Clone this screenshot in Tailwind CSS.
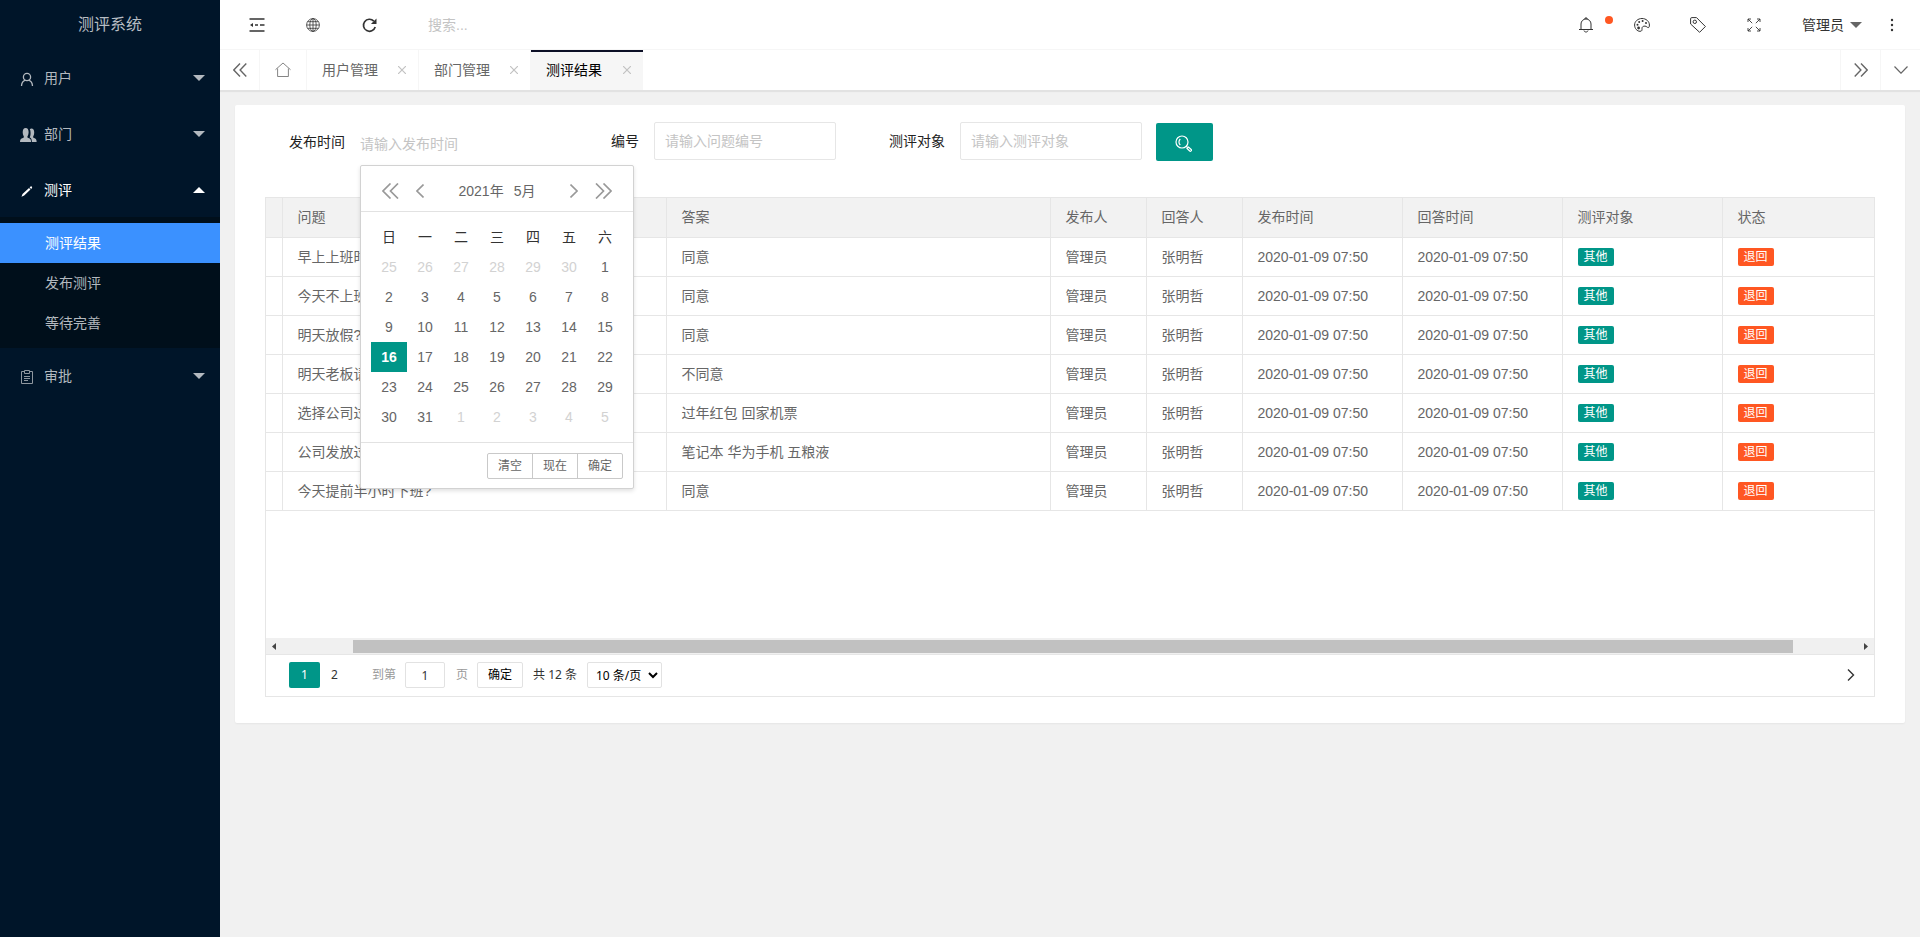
<!DOCTYPE html>
<html lang="zh-CN">
<head>
<meta charset="utf-8">
<title>测评系统</title>
<meta name="viewport" content="width=device-width, initial-scale=1">
<script src="https://cdn.jsdelivr.net/npm/@tailwindcss/browser@4"></script>
</head>
<body class="flex min-h-screen bg-[#f1f1f1] font-['Liberation_Sans','Noto_Sans_CJK_SC',sans-serif] text-sm text-[#666]">

<aside class="w-[220px] shrink-0 bg-[#001529] text-[#b3b9bf]">
  <h1 class="flex h-[49px] items-center justify-center text-base text-[#b8bdc3]">测评系统</h1>
  <nav>
    <button type="button" class="flex h-14 w-full items-center pt-0.5 pr-[15px] pl-5">
      <svg class="mt-0.5 mr-2.5 size-3.5 text-[#b3b9bf]" viewBox="0 0 14 14" fill="none" stroke="currentColor" stroke-width="1.3"><circle cx="7" cy="5" r="3.6"/><path d="M1.5 14c.2-3 1.600-5 3.800-5.800M12.500 14c-.2-3-1.600-5-3.800-5.800"/></svg>
      <span>用户</span>
      <svg class="ml-auto h-1.5 w-3" viewBox="0 0 12 6" fill="currentColor"><path d="M0 0h12L6 6z"/></svg>
    </button>
    <button type="button" class="flex h-14 w-full items-center pt-0.5 pr-[15px] pl-5">
      <svg class="mt-0.5 mr-1.5 h-3.5 w-[18px]" viewBox="0 0 20 14" preserveAspectRatio="none" fill="currentColor"><path d="M0 14c0-2.500 1-3.400 3.200-4 1.100-.3 1.400-1 .9-1.800C3.300 7 3 5.600 3 4.200 3 1.600 4.200 0 6.300 0s3.300 1.600 3.300 4.200c0 1.400-.4 2.800-1.200 4-.5.800-.2 1.500.9 1.800 2.200.6 3 1.500 3 4z"/><path d="M13.200 14c0-2.300-.6-3.700-2.500-4.700.8-1 1.200-3 1-5.100 0-1.200-.3-2.200-.8-3 .5-.5 1.100-.7 1.800-.7 2 0 3.100 1.500 3.100 3.900 0 1.400-.3 2.700-1 3.800-.5.800-.2 1.500.8 1.800 2 .6 2.900 1.600 2.900 4z"/></svg>
      <span>部门</span>
      <svg class="ml-auto h-1.5 w-3" viewBox="0 0 12 6" fill="currentColor"><path d="M0 0h12L6 6z"/></svg>
    </button>
    <button type="button" class="flex h-14 w-full items-center pt-0.5 pr-[15px] pl-5 text-white" aria-expanded="true">
      <svg class="mt-0.5 mr-2.5 size-3.5" viewBox="0 0 14 14" fill="currentColor"><path d="M1.500 12.800l1-2.800 6.500-6 1.500 1.500L4.200 11.600zM9.600 3.400l1-.9c.8-.6 2 .5 1.400 1.400l-.8 1z"/></svg>
      <span>测评</span>
      <svg class="ml-auto h-1.5 w-3" viewBox="0 0 12 6" fill="currentColor"><path d="M0 6h12L6 0z"/></svg>
    </button>
    <div class="bg-[#000f1b] py-[5px]">
      <a href="#" class="mt-px flex h-10 items-center bg-[#3b91ff] pl-[45px] text-white">测评结果</a>
      <a href="#" class="flex h-10 items-center pl-[45px]">发布测评</a>
      <a href="#" class="flex h-10 items-center pl-[45px]">等待完善</a>
    </div>
    <button type="button" class="flex h-14 w-full items-center pr-[15px] pl-5">
      <svg class="mt-0.5 mr-2.5 size-3.5 text-[#8f979f]" viewBox="0 0 14 14" fill="none" stroke="currentColor"><path d="M4 1.500H1.500v12h11v-12H10M4.500.5h5v3h-5zM4 6.500h6M4 8.500h6M4 10.500h4"/></svg>
      <span>审批</span>
      <svg class="ml-auto h-1.5 w-3" viewBox="0 0 12 6" fill="currentColor"><path d="M0 0h12L6 6z"/></svg>
    </button>
  </nav>
</aside>

<div class="min-w-0 flex-1">
  <header class="flex h-[50px] items-center border-b border-[#f6f6f6] bg-white pt-px text-[#333]">
    <button type="button" aria-label="收起菜单" class="ml-[9px] flex w-14 justify-center">
      <svg class="h-3.5 w-4" viewBox="0 0 16 14" fill="none" stroke="currentColor" stroke-width="1.500"><path d="M.500 1h15M6 7h3M11 7h4.500M.500 13h15"/><path d="M1 7l3-2v4z" fill="currentColor" stroke="none"/></svg>
    </button>
    <button type="button" aria-label="网站" class="flex w-14 justify-center">
      <svg class="size-3.5" viewBox="0 0 14 14" fill="none" stroke="currentColor" stroke-width=".8"><circle cx="7" cy="7" r="6.400"/><ellipse cx="7" cy="7" rx="3.200" ry="6.400"/><path d="M7 .6v12.800M.6 7h12.800M1.600 3.700h10.800M1.600 10.300h10.800"/></svg>
    </button>
    <button type="button" aria-label="刷新" class="flex w-14 justify-center">
      <svg class="size-[15px]" viewBox="0 0 15 15" fill="none" stroke="currentColor" stroke-width="1.700"><path d="M11.800 3.100A6 6 0 1 0 13.200 9"/><path d="M14.500.5v5.600H8.900z" fill="currentColor" stroke="none"/></svg>
    </button>
    <input type="text" aria-label="搜索" placeholder="搜索..." class="ml-[31px] w-44 outline-none placeholder:text-[#c4c4c4]">
    <button type="button" aria-label="消息" class="relative ml-auto flex w-14 justify-center">
      <svg class="size-4" viewBox="0 0 16 16" fill="none" stroke="currentColor"><path d="M1 12.500h14M3 12.500V7a5 5 0 0 1 10 0v5.500M7 2V1h2v1M6 13.500c.3 2 3.700 2 4 0"/></svg>
      <span class="absolute -top-px right-px size-2 rounded-full bg-[#ff5722]"></span>
    </button>
    <button type="button" aria-label="主题" class="flex w-14 justify-center">
      <svg class="size-4" viewBox="0 0 16 16" fill="none" stroke="currentColor"><path d="M8 1.500C3.900 1.500.6 4.400.6 8c0 3.500 2.500 6.300 5.400 6.300 2.300 0 2-1.500 2-2.800 0-1.700 1.200-2.500 3-2.400 1.700.1 2.200 1.500 3.200 1.500 1 0 1.200-1.200 1.200-2.600C15.400 4.400 12.100 1.500 8 1.500z"/><g fill="currentColor" stroke="none"><circle cx="3.500" cy="7.800" r="1"/><circle cx="5.200" cy="4.900" r="1"/><circle cx="8.600" cy="4" r="1"/><circle cx="12" cy="6" r="1"/><circle cx="4.600" cy="11" r="1.400"/></g></svg>
    </button>
    <button type="button" aria-label="标签" class="flex w-14 justify-center">
      <svg class="size-4" viewBox="0 0 16 16" fill="none" stroke="currentColor"><path d="M.600 1.800Q.600.600 1.800.600H6.500L15.400 9.500 9.600 15.300.600 7z"/><circle cx="4.800" cy="4.800" r="1.700"/></svg>
    </button>
    <button type="button" aria-label="全屏" class="flex w-14 justify-center">
      <svg class="size-3.5" viewBox="0 0 14 14" fill="none" stroke="currentColor" stroke-width=".9"><path d="M1 4V1h3M1 1l4.200 4.200M10 1h3v3M13 1 8.800 5.200M1 10v3h3M1 13l4.200-4.200M13 10v3h-3M13 13 8.800 8.800"/></svg>
    </button>
    <button type="button" class="ml-5 flex items-center text-[#333]">管理员
      <svg class="ml-1.5 h-1.5 w-3 text-[#666]" viewBox="0 0 12 6" fill="currentColor"><path d="M0 0h12L6 6z"/></svg>
    </button>
    <button type="button" aria-label="更多" class="mr-4 ml-[18px] flex w-6 justify-center">
      <svg class="h-3.5 w-1" viewBox="0 0 4 14" fill="currentColor"><circle cx="2" cy="2" r="1.200"/><circle cx="2" cy="7" r="1.200"/><circle cx="2" cy="12" r="1.200"/></svg>
    </button>
  </header>

  <div class="flex h-10 bg-white shadow-[0_2px_1px_0_rgba(0,0,0,0.06)]">
    <button type="button" aria-label="向左" class="flex w-10 items-center justify-center border-r border-[#f6f6f6]">
      <svg class="size-3.5" viewBox="0 0 14 14" fill="none" stroke="currentColor" stroke-width="1.400"><path d="M7 .5.800 7 7 13.500M13.300.5 7.100 7l6.200 6.500"/></svg>
    </button>
    <a href="#" aria-label="首页" class="flex w-[47px] items-center justify-center border-r border-[#f6f6f6]">
      <svg class="size-4 text-[#777]" viewBox="0 0 16 16" fill="none" stroke="currentColor" stroke-width=".9"><path d="M.5 7.700 8 1l7.500 6.700M2.600 6.500v8h10.800v-8"/></svg>
    </a>
    <div class="flex w-28 items-center justify-between border-r border-[#f6f6f6] pr-3 pl-[15px]"><a href="#">用户管理</a><button type="button" aria-label="关闭" class="text-[#c2c2c2]"><svg class="size-2" viewBox="0 0 8 8" fill="none" stroke="currentColor" stroke-width="1.200"><path d="M0 0l8 8M8 0 0 8"/></svg></button></div>
    <div class="flex w-28 items-center justify-between border-r border-[#f6f6f6] pr-3 pl-[15px]"><a href="#">部门管理</a><button type="button" aria-label="关闭" class="text-[#c2c2c2]"><svg class="size-2" viewBox="0 0 8 8" fill="none" stroke="currentColor" stroke-width="1.200"><path d="M0 0l8 8M8 0 0 8"/></svg></button></div>
    <div class="flex w-28 items-center justify-between border-t-2 border-[#0c0f26] bg-[#f6f6f6] pr-3 pb-0.5 pl-[15px] text-black"><a href="#">测评结果</a><button type="button" aria-label="关闭" class="text-[#c2c2c2]"><svg class="size-2" viewBox="0 0 8 8" fill="none" stroke="currentColor" stroke-width="1.200"><path d="M0 0l8 8M8 0 0 8"/></svg></button></div>
    <button type="button" aria-label="向右" class="ml-auto flex w-10 items-center justify-center border-l border-[#f6f6f6]">
      <svg class="size-3.5" viewBox="0 0 14 14" fill="none" stroke="currentColor" stroke-width="1.400"><path d="M.7.500 6.900 7 .7 13.500M7 .5 13.200 7 7 13.500"/></svg>
    </button>
    <button type="button" aria-label="页签操作" class="flex w-10 items-center justify-center border-l border-[#f6f6f6]">
      <svg class="h-2 w-3.5" viewBox="0 0 14 8" fill="none" stroke="currentColor" stroke-width="1.200"><path d="M.5.500 7 7.200 13.500.500"/></svg>
    </button>
  </div>

  <main class="m-[15px] rounded-xs bg-white px-[30px] pt-[17px] pb-[26px] shadow-[0_1px_2px_0_rgba(0,0,0,0.05)]">
    <form class="flex items-start text-black">
      <div class="relative flex pl-6">
        <label for="date" class="flex h-10 items-center text-[#222]">发布时间</label>
        <input id="date" type="text" placeholder="请输入发布时间" class="mt-[3px] ml-[15px] h-[38px] w-[182px] outline-none placeholder:text-[#c4c4c4]">

        <div class="absolute top-[43px] left-[95px] z-10 w-[274px] rounded-xs border border-[#d2d2d2] bg-white text-[#666] shadow-[0_2px_4px_rgba(0,0,0,0.12)]">
          <div class="flex h-[46px] items-center border-b border-[#e2e2e2] px-[21px] pt-1 text-[#999]">
            <button type="button" aria-label="上一年"><svg class="h-4 w-[17px]" viewBox="0 0 17 16" fill="none" stroke="currentColor" stroke-width="1.700"><path d="M8.500.5 1 8l7.500 7.500M16 .5 8.500 8l7.500 7.500"/></svg></button>
            <button type="button" aria-label="上一月" class="ml-[17px]"><svg class="h-3.5 w-2" viewBox="0 0 8 14" fill="none" stroke="currentColor" stroke-width="1.600"><path d="M7.500.5 1 7l6.500 6.500"/></svg></button>
            <div class="flex flex-1 justify-center gap-2.5 text-[#666]"><span>2021年</span><span>5月</span></div>
            <button type="button" aria-label="下一月" class="mr-[17px]"><svg class="h-3.5 w-2" viewBox="0 0 8 14" fill="none" stroke="currentColor" stroke-width="1.600"><path d="M.5.500 7 7l-6.500 6.500"/></svg></button>
            <button type="button" aria-label="下一年"><svg class="h-4 w-[17px]" viewBox="0 0 17 16" fill="none" stroke="currentColor" stroke-width="1.700"><path d="M1 .5 8.500 8 1 15.500M8.500.500 16 8l-7.500 7.500"/></svg></button>
          </div>
          <div class="p-2.5">
            <table class="w-full table-fixed text-center">
              <thead><tr class="h-[30px] text-[#333]"><th class="font-normal">日</th><th class="font-normal">一</th><th class="font-normal">二</th><th class="font-normal">三</th><th class="font-normal">四</th><th class="font-normal">五</th><th class="font-normal">六</th></tr></thead>
              <tbody id="days"></tbody>
            </table>
          </div>
          <div class="flex h-[46px] items-center justify-end border-t border-[#e2e2e2] px-2.5 text-xs">
            <button type="button" class="h-[26px] w-[46px] rounded-l-xs border border-[#c9c9c9]">清空</button>
            <button type="button" class="-ml-px h-[26px] w-[46px] border border-[#c9c9c9]">现在</button>
            <button type="button" class="-ml-px h-[26px] w-[46px] rounded-r-xs border border-[#c9c9c9]">确定</button>
          </div>
        </div>
      </div>
      <div class="ml-[69px] flex">
        <label for="no" class="flex h-[38px] items-center text-[#222]">编号</label>
        <input id="no" type="text" placeholder="请输入问题编号" class="ml-[15px] h-[38px] w-[182px] rounded-xs border border-[#e6e6e6] px-2.5 outline-none placeholder:text-[#c4c4c4]">
      </div>
      <div class="ml-[53px] flex">
        <label for="target" class="flex h-[38px] items-center text-[#222]">测评对象</label>
        <input id="target" type="text" placeholder="请输入测评对象" class="ml-[15px] h-[38px] w-[182px] rounded-xs border border-[#e6e6e6] px-2.5 outline-none placeholder:text-[#c4c4c4]">
      </div>
      <button type="submit" aria-label="查询" class="mt-px ml-3.5 flex h-[38px] w-[57px] items-center justify-center rounded-xs bg-[#009688] text-white">
        <svg class="mt-0.5 mr-0.5 size-[17px]" viewBox="0 0 17 17" fill="none" stroke="currentColor" stroke-width="1.200"><circle cx="7" cy="7" r="6"/><path d="M5.300 4a4 4 0 0 0 0 6M11.300 11.300l1.300 1.200"/><path d="M12 13.400 13.500 12l2.700 2.500c.8.900-.6 2.300-1.500 1.500z"/></svg>
      </button>
    </form>

    <section class="mt-[34px] border border-[#e6e6e6]">
      <div class="h-[440px] overflow-hidden">
        <table class="w-full table-fixed border-collapse text-left">
          <colgroup><col class="w-4"><col class="w-96"><col class="w-96"><col class="w-24"><col class="w-24"><col class="w-40"><col class="w-40"><col class="w-40"><col></colgroup>
          <thead>
            <tr class="h-[39px] border-b border-[#e6e6e6] bg-[#f2f2f2]">
              <th class="border-r border-[#e6e6e6]"></th>
              <th class="border-r border-[#e6e6e6] px-[15px] font-normal">问题</th>
              <th class="border-r border-[#e6e6e6] px-[15px] font-normal">答案</th>
              <th class="border-r border-[#e6e6e6] px-[15px] font-normal">发布人</th>
              <th class="border-r border-[#e6e6e6] px-[15px] font-normal">回答人</th>
              <th class="border-r border-[#e6e6e6] px-[15px] font-normal">发布时间</th>
              <th class="border-r border-[#e6e6e6] px-[15px] font-normal">回答时间</th>
              <th class="border-r border-[#e6e6e6] px-[15px] font-normal">测评对象</th>
              <th class="px-[15px] font-normal">状态</th>
            </tr>
          </thead>
          <tbody id="rows"></tbody>
        </table>
      </div>
      <div class="flex h-[17px] items-center border-b border-[#e6e6e6] bg-[#f0f0f0] px-1.5 text-[#444]">
        <svg class="h-[7px] w-1" viewBox="0 0 4 7" fill="currentColor"><path d="M4 0v7L0 3.500z"/></svg>
        <div class="mr-[71px] ml-[77px] h-[13px] flex-1 bg-[#c1c1c1]"></div>
        <svg class="h-[7px] w-1" viewBox="0 0 4 7" fill="currentColor"><path d="M0 0v7l4-3.500z"/></svg>
      </div>
      <div class="flex h-[41px] items-center pr-[19px] pb-px pl-[23px] font-['Noto_Sans','Noto_Sans_CJK_SC',sans-serif] text-xs text-[#333]">
        <button type="button" class="h-[26px] w-[31px] rounded-xs bg-[#009688] text-white">1</button>
        <button type="button" class="h-[26px] w-[29px]">2</button>
        <label for="page" class="ml-[23px] text-[#999]">到第</label>
        <input id="page" type="text" value="1" class="ml-[9px] h-[26px] w-10 rounded-xs border border-[#e2e2e2] text-center outline-none">
        <span class="ml-[11px] text-[#999]">页</span>
        <button type="button" class="ml-[9px] h-[26px] w-[46px] rounded-xs border border-[#e2e2e2] text-black">确定</button>
        <span class="ml-2.5">共 12 条</span>
        <select aria-label="每页条数" class="ml-2.5 h-[26px] w-[75px] rounded-xs border border-[#e2e2e2] bg-white pl-1 text-black"><option>10 条/页</option></select>
        <button type="button" aria-label="下一页" class="ml-auto"><svg class="h-3 w-2" viewBox="0 0 8 12" fill="none" stroke="currentColor" stroke-width="1.400"><path d="M1 .5 6.500 6 1 11.500"/></svg></button>
      </div>
    </section>
  </main>
</div>

<script>
const rows = [
  ['早上上班时间?', '同意'],
  ['今天不上班?', '同意'],
  ['明天放假?', '同意'],
  ['明天老板请客?', '不同意'],
  ['选择公司过年礼品', '过年红包 回家机票'],
  ['公司发放过年礼品', '笔记本 华为手机 五粮液'],
  ['今天提前半小时下班?', '同意']
];
const cell = t => `<td class="truncate border-r border-[#e6e6e6] px-[15px]">${t}</td>`;
document.getElementById('rows').innerHTML = rows.map(([q, a]) => `
  <tr class="h-[39px] border-b border-[#e6e6e6]">
    <td class="border-r border-[#e6e6e6]"></td>
    ${[q, a, '管理员', '张明哲', '2020-01-09 07:50', '2020-01-09 07:50'].map(cell).join('')}
    <td class="border-r border-[#e6e6e6] px-[15px]"><span class="block h-[18px] w-9 rounded-xs bg-[#009688] text-center text-xs leading-[18px] text-white">其他</span></td>
    <td class="px-[15px]"><span class="block h-[18px] w-9 rounded-xs bg-[#ff5722] text-center text-xs leading-[18px] text-white">退回</span></td>
  </tr>`).join('');

// 2021 年 5 月：前补 4 月 25–30 日，后补 6 月 1–5 日
let html = '';
for (let i = 0; i < 42; i++) {
  const d = i - 5;
  const other = d < 1 || d > 31;
  const n = d < 1 ? d + 30 : d > 31 ? d - 31 : d;
  const cls = other ? 'text-[#d2d2d2]' : d === 16 ? 'bg-[#009688] font-bold text-white' : '';
  html += (i % 7 ? '' : '<tr class="h-[30px]">') + `<td class="${cls}">${n}</td>` + (i % 7 === 6 ? '</tr>' : '');
}
document.getElementById('days').innerHTML = html;
</script>
</body>
</html>
